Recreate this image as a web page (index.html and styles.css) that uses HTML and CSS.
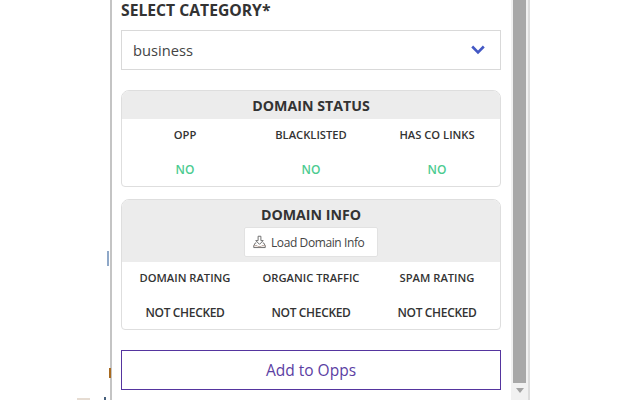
FILE: index.html
```html
<!DOCTYPE html>
<html lang="en">
<head>
<meta charset="utf-8">
<title>Select category</title>
<link rel="stylesheet" href="styles.css">
</head>
<body>
<div class="page">
  <div class="stray stray-a"></div>
  <div class="stray stray-b"></div>
  <div class="stray stray-c"></div>
  <div class="stray stray-d"></div>
  <aside class="panel">
    <main class="content">
      <h1 class="label">SELECT CATEGORY*</h1>
      <div class="select">
        <span>business</span>
        <svg class="chevron" width="14" height="10" viewBox="0 0 14 10"><path d="M1.200 1.500 7 7.300l5.800-5.800" fill="none" stroke="#4358c4" stroke-width="2.600"/></svg>
      </div>
      <section class="card status">
        <h2 class="card-head head-short">DOMAIN STATUS</h2>
        <div class="grid">
          <div class="cell-title">OPP</div>
          <div class="cell-title">BLACKLISTED</div>
          <div class="cell-title">HAS CO LINKS</div>
          <div class="cell-value ok">NO</div>
          <div class="cell-value ok">NO</div>
          <div class="cell-value ok">NO</div>
        </div>
      </section>
      <section class="card info">
        <div class="card-head head-tall">
          <h2 class="head-text">DOMAIN INFO</h2>
          <button class="load" type="button">
            <svg width="13" height="14" viewBox="0 0 14 14" fill="none" stroke="#666" stroke-width="1"><path d="M5.500 .8h3v4.700h2.500L7 9.500 3 5.500h2.500z"/><path d="M3.500 8H2.500L.8 11v2h12.400v-2l-1.700-3h-1"/><path d="M.8 11h3.700l1 1h3l1-1h3.700" stroke="#b09a90"/></svg>
            <span>Load Domain Info</span>
          </button>
        </div>
        <div class="grid">
          <div class="cell-title">DOMAIN RATING</div>
          <div class="cell-title">ORGANIC TRAFFIC</div>
          <div class="cell-title">SPAM RATING</div>
          <div class="cell-value">NOT CHECKED</div>
          <div class="cell-value">NOT CHECKED</div>
          <div class="cell-value">NOT CHECKED</div>
        </div>
      </section>
      <button class="add" type="button">Add to Opps</button>
    </main>
    <div class="scrollbar">
      <div class="thumb"></div>
      <div class="arrow"></div>
    </div>
  </aside>
</div>
</body>
</html>
```
FILE: styles.css
```css
* { box-sizing: border-box; }
html, body { margin: 0; height: 100%; overflow: hidden; background: #fff; }
body { font-family: "Open Sans", "Noto Sans", sans-serif; color: #333; }
.page { position: relative; height: 400px; padding-left: 110px; }
.panel {
  width: 420px; height: 400px; display: flex;
  border-left: 2px solid #c4c4c4;
  border-right: 2px solid #dcdcdc;
}
.content { width: 399px; padding: 0 10px 0 9px; }
.label { margin: 0; height: 30px; font-size: 15.7px; line-height: 21px; font-weight: 700; color: #333; }
.select {
  height: 40px; display: flex; align-items: center; justify-content: space-between;
  padding: 0 15px 0 11px; border: 1px solid #d9d9d9; font-size: 14.700px; color: #444;
}
.card { border: 1px solid #dedede; border-radius: 8px 8px 4px 4px; overflow: hidden; }
.status { margin-top: 20px; height: 97px; }
.info { margin-top: 12px; height: 131px; }
.card-head { margin: 0; background: #ececec; text-align: center; font-size: 14.200px; font-weight: 700; color: #333; }
.head-short { height: 28px; line-height: 30px; }
.head-tall { height: 62px; padding-top: 5px; display: flex; flex-direction: column; align-items: center; }
.head-text { margin: 0; font-size: 14.200px; line-height: 20px; font-weight: 700; }
.load {
  margin-top: 2px; width: 134px; height: 30px; display: flex; align-items: center; gap: 5px;
  padding: 0 0 0 8px; border: 1px solid #e2e2e2; border-radius: 2px; background: #fff;
  font-family: inherit; font-size: 12px; letter-spacing: -0.4px; color: #444;
}
.grid { display: grid; grid-template-columns: repeat(3, 1fr); grid-template-rows: 35px 32px; text-align: center; }
.cell-title { font-size: 11.200px; font-weight: 600; color: #333; line-height: 31px; }
.cell-value { font-size: 12px; letter-spacing: -0.35px; font-weight: 600; line-height: 32px; color: #333; }
.cell-value.ok { color: #4ccb91; letter-spacing: 0; }
.add {
  display: block; width: 100%; height: 40px; margin-top: 20px;
  border: 1px solid #55359f; background: #fff; color: #5b3ea3;
  font-family: inherit; font-size: 15.500px;
}
.scrollbar { position: relative; width: 17px; background: #f1f1f1; padding: 0 2px; }
.thumb { height: 383px; background: #a8a8a8; }
.arrow { width: 0; height: 0; margin: 5px auto 0; border: 4px solid transparent; border-top: 5px solid #a3a3a3; border-bottom: 0; }
.stray { position: absolute; }
.stray-a { left: 107px; top: 251px; width: 2px; height: 15px; background: #8fa8c8; }
.stray-b { left: 109px; top: 368px; width: 2px; height: 10px; background: #a86a20; }
.stray-c { left: 77px; top: 398px; width: 13px; height: 2px; background: #e6dcd2; }
.stray-d { left: 104px; top: 397px; width: 2px; height: 3px; background: #46607c; }
```
